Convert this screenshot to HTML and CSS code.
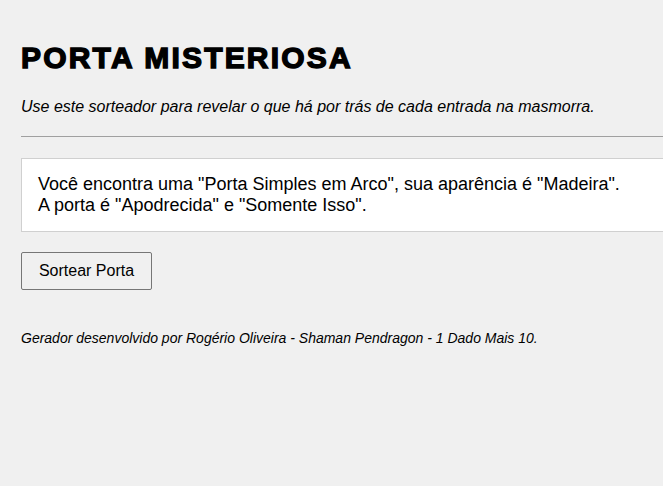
FILE: index.html
```html
<!DOCTYPE html>
<html lang="pt-BR">
<head>
    <meta charset="UTF-8">
    <meta name="viewport" content="width=device-width, initial-scale=1.0">
    <title>Porta Misteriosa</title>
    <link rel="stylesheet" href="styles.css">
</head>
<body>
    <!-- Cabeçalho -->
    <h1 class="title">PORTA MISTERIOSA</h1>
    <p class="subtitle">Use este sorteador para revelar o que há por trás de cada entrada na masmorra.</p>
    <hr class="divider">

    <!-- Resultado do sorteio -->
    <div class="result" id="resultado">
        Você encontra uma "Porta Simples em Arco", sua aparência é "Madeira".<br>
        A porta é "Apodrecida" e "Somente Isso".
    </div>

    <button class="draw-btn" type="button">Sortear Porta</button>

    <p class="credits">Gerador desenvolvido por Rogério Oliveira - Shaman Pendragon - 1 Dado Mais 10.</p>
</body>
</html>
```

FILE: styles.css
```css
/* Página */
body {
    font-family: "Liberation Sans", Arial, sans-serif;
    background-color: #f0f0f0;
    color: #000;
    margin: 0;
    padding: 40px 0 0 21px;
    overflow: hidden;
}

/* Título */
.title {
    font-size: 30px;
    font-weight: 900;
    -webkit-text-stroke: 1.4px #000;
    letter-spacing: 2.2px;
    margin: 0;
    line-height: 36px;
}

.subtitle {
    font-style: italic;
    font-size: 16px;
    margin: 21px 0 0;
    line-height: 20px;
}

.divider {
    border: none;
    border-top: 1px solid #a0a0a0;
    margin: 19px 0 0;
}

/* Caixa de resultado */
.result {
    background-color: #fff;
    border: 1px solid #d0d0d0;
    border-right: none;
    padding: 15px 16px;
    margin-top: 21px;
    font-size: 18px;
    line-height: 21px;
}

/* Botão */
.draw-btn {
    display: block;
    margin-top: 20px;
    width: 131px;
    height: 38px;
    font-family: "Liberation Sans", Arial, sans-serif;
    font-size: 16px;
    background-color: #f0f0f0;
    border: 1px solid #767676;
    border-radius: 2px;
    color: #000;
}

.credits {
    font-style: italic;
    font-size: 14px;
    margin: 40px 0 0;
}
```
